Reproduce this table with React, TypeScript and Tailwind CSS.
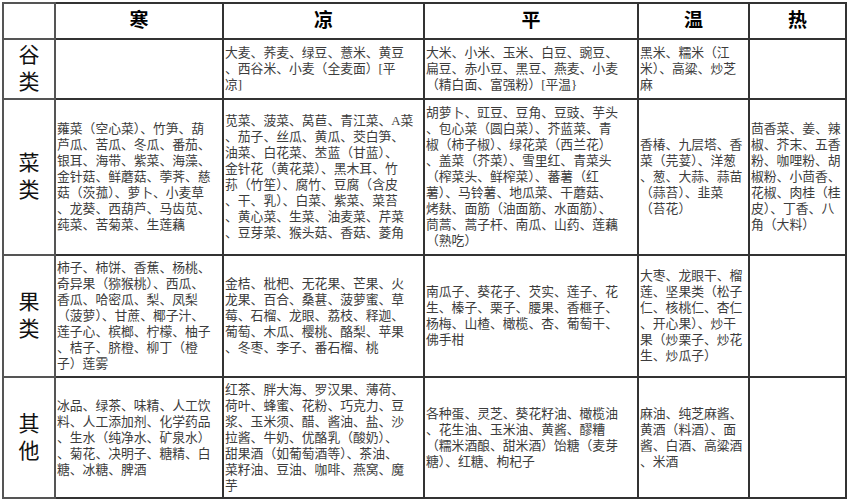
type Cell = string[];

interface Row {
  label: string[];
  height: number;
  cells: Cell[];
}

const heads = ["寒", "凉", "平", "温", "热"];
const widths = ["w-[52px]", "w-[168px]", "w-[201px]", "w-[214px]", "w-[111px]", "w-[97px]"];

const rows: Row[] = [
  {
    label: ["谷", "类"],
    height: 60,
    cells: [
      [],
      ["大麦、荞麦、绿豆、薏米、黄豆", "、西谷米、小麦（全麦面）[平", "凉]"],
      ["大米、小米、玉米、白豆、豌豆、", "扁豆、赤小豆、黑豆、燕麦、小麦", "（精白面、富强粉）[平温}"],
      ["黑米、糯米（江", "米）、高粱、炒芝", "麻"],
      [],
    ],
  },
  {
    label: ["菜", "类"],
    height: 156,
    cells: [
      [
        "蕹菜（空心菜）、竹笋、葫",
        "芦瓜、苦瓜、冬瓜、番茄、",
        "银耳、海带、紫菜、海藻、",
        "金针菇、鲜蘑菇、荸荠、慈",
        "菇（茨菰）、萝卜、小麦草",
        "、龙葵、西葫芦、马齿苋、",
        "莼菜、苦菊菜、生莲藕",
      ],
      [
        "苋菜、菠菜、莴苣、青江菜、A菜",
        "、茄子、丝瓜、黄瓜、茭白笋、",
        "油菜、白花菜、苤蓝（甘蓝）、",
        "金针花（黄花菜）、黑木耳、竹",
        "荪（竹笙）、腐竹、豆腐（含皮",
        "、干、乳）、白菜、紫菜、菜苔",
        "、黄心菜、生菜、油麦菜、芹菜",
        "、豆芽菜、猴头菇、香菇、菱角",
      ],
      [
        "胡萝卜、豇豆、豆角、豆豉、芋头",
        "、包心菜（圆白菜）、芥蓝菜、青",
        "椒（柿子椒）、绿花菜（西兰花）",
        "、盖菜（芥菜）、雪里红、青菜头",
        "（榨菜头、鲜榨菜）、蕃薯（红",
        "薯）、马铃薯、地瓜菜、干蘑菇、",
        "烤麸、面筋（油面筋、水面筋）、",
        "茼蒿、蒿子杆、南瓜、山药、莲藕",
        "（熟吃）",
      ],
      ["香椿、九层塔、香", "菜（芫荽）、洋葱", "、葱、大蒜、蒜苗", "（蒜苔）、韭菜", "（苔花）"],
      ["茴香菜、姜、辣", "椒、芥末、五香", "粉、咖哩粉、胡", "椒粉、小茴香、", "花椒、肉桂（桂", "皮）、丁香、八", "角（大料）"],
    ],
  },
  {
    label: ["果", "类"],
    height: 122,
    cells: [
      [
        "柿子、柿饼、香蕉、杨桃、",
        "奇异果（猕猴桃）、西瓜、",
        "香瓜、哈密瓜、梨、凤梨",
        "（菠萝）、甘蔗、椰子汁、",
        "莲子心、槟榔、柠檬、柚子",
        "、桔子、脐橙、柳丁（橙",
        "子）莲雾",
      ],
      [
        "金桔、枇杷、无花果、芒果、火",
        "龙果、百合、桑葚、菠萝蜜、草",
        "莓、石榴、龙眼、荔枝、释迦、",
        "葡萄、木瓜、樱桃、酪梨、苹果",
        "、冬枣、李子、番石榴、桃",
      ],
      ["南瓜子、葵花子、芡实、莲子、花", "生、榛子、栗子、腰果、香榧子、", "杨梅、山楂、橄榄、杏、葡萄干、", "佛手柑"],
      ["大枣、龙眼干、榴", "莲、坚果类（松子", "仁、核桃仁、杏仁", "、开心果）、炒干", "果（炒栗子、炒花", "生、炒瓜子）"],
      [],
    ],
  },
  {
    label: ["其", "他"],
    height: 121,
    cells: [
      ["冰品、绿茶、味精、人工饮", "料、人工添加剂、化学药品", "、生水（纯净水、矿泉水）", "、菊花、决明子、糖精、白", "糖、冰糖、脾酒"],
      [
        "红茶、胖大海、罗汉果、薄荷、",
        "荷叶、蜂蜜、花粉、巧克力、豆",
        "浆、玉米须、醋、酱油、盐、沙",
        "拉酱、牛奶、优酪乳（酸奶）、",
        "甜果酒（如葡萄酒等）、茶油、",
        "菜籽油、豆油、咖啡、燕窝、魔",
        "芋",
      ],
      ["各种蛋、灵芝、葵花籽油、橄榄油", "、花生油、玉米油、黄酱、醪糟", "（糯米酒酿、甜米酒）饴糖（麦芽", "糖）、红糖、枸杞子"],
      ["麻油、纯芝麻酱、", "黄酒（料酒）、面", "酱、白酒、高粱酒", "、米酒"],
      [],
    ],
  },
];

const font = { fontFamily: '"Liberation Serif", "Noto Sans CJK SC", serif' };

export default function App() {
  return (
    <div className="w-[847px] h-[500px] bg-white pt-[2px] pl-[2px]" style={font}>
      <table className="border-collapse table-fixed w-[843px]">
        <colgroup>
          {widths.map((w, i) => (
            <col key={i} className={w} />
          ))}
        </colgroup>
        <thead>
          <tr className="h-[36px]">
            <th className="border-2 border-[#555]" />
            {heads.map((h) => (
              <th
                key={h}
                className="border-2 border-[#333] text-center text-[19px] font-bold text-black"
              >
                {h}
              </th>
            ))}
          </tr>
        </thead>
        <tbody>
          {rows.map((r, ri) => (
            <tr key={ri} style={{ height: r.height }}>
              <td className="border-2 border-[#555] text-center align-middle">
                <div className="flex flex-col items-center text-[21px] leading-[27px] text-[#111]">
                  {r.label.map((c) => (
                    <span key={c}>{c}</span>
                  ))}
                </div>
              </td>
              {r.cells.map((lines, ci) => (
                <td
                  key={ci}
                  className="border-2 border-[#333] align-middle px-[1px] py-0 overflow-hidden"
                >
                  <div className="text-[12.8px] leading-[16px] text-[#3c3c3c] whitespace-nowrap">
                    {lines.map((l, li) => (
                      <div key={li}>{l}</div>
                    ))}
                  </div>
                </td>
              ))}
            </tr>
          ))}
        </tbody>
      </table>
    </div>
  );
}
